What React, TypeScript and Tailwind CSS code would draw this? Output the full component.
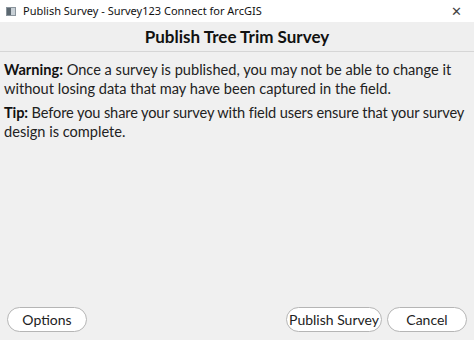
import React from 'react';

const font = { fontFamily: 'Lato, "Open Sans", sans-serif' };

function Pill({ children, className = '' }: { children: React.ReactNode; className?: string }) {
  return (
    <button
      className={`h-[25px] rounded-full border border-[#b5b5b5] bg-white text-[14px] text-[#222] ${className}`}
    >
      {children}
    </button>
  );
}

export default function App() {
  return (
    <div className="w-[474px] h-[340px] flex flex-col bg-[#f0f0f0] overflow-hidden" style={font}>
      {/* window title bar */}
      <div className="h-[22px] bg-white flex items-center px-[6px] shrink-0" style={{ fontFamily: '"Noto Sans", sans-serif' }}>
        <div className="w-[10px] h-[9px] bg-[#c8d0d6] border border-[#8a949c] mr-[7px] flex">
          <div className="w-[4px] h-full bg-[#5b6770]" />
        </div>
        <span className="text-[11px] text-[#111]">Publish Survey - Survey123 Connect for ArcGIS</span>
        <span className="ml-auto mr-[6px] text-[13px] text-[#444] leading-none font-light">✕</span>
      </div>

      {/* header */}
      <div className="h-[30px] shrink-0 flex items-center justify-center border-b border-[#d6d6d6] bg-[#efefef]">
        <h1 className="text-[17px] font-bold text-[#111]">Publish Tree Trim Survey</h1>
      </div>

      {/* body */}
      <div className="flex-1 pl-[4px] pt-[8px] text-[14.6px] leading-[19px] text-[#222] whitespace-nowrap">
        <p className="mb-[5px]">
          <b className="text-[#111]">Warning:</b> Once a survey is published, you may not be able to change it
          <br />
          without losing data that may have been captured in the field.
        </p>
        <p>
          <span className="tracking-[-0.12px]">
            <b className="text-[#111]">Tip:</b> Before you share your survey with field users ensure that your survey
          </span>
          <br />
          design is complete.
        </p>
      </div>

      {/* footer */}
      <div className="flex items-center px-[7px] pb-[8px] shrink-0">
        <Pill className="w-[80px]">Options</Pill>
        <div className="ml-auto flex gap-[5px]">
          <Pill className="w-[96px]">Publish Survey</Pill>
          <Pill className="w-[80px]">Cancel</Pill>
        </div>
      </div>
    </div>
  );
}
